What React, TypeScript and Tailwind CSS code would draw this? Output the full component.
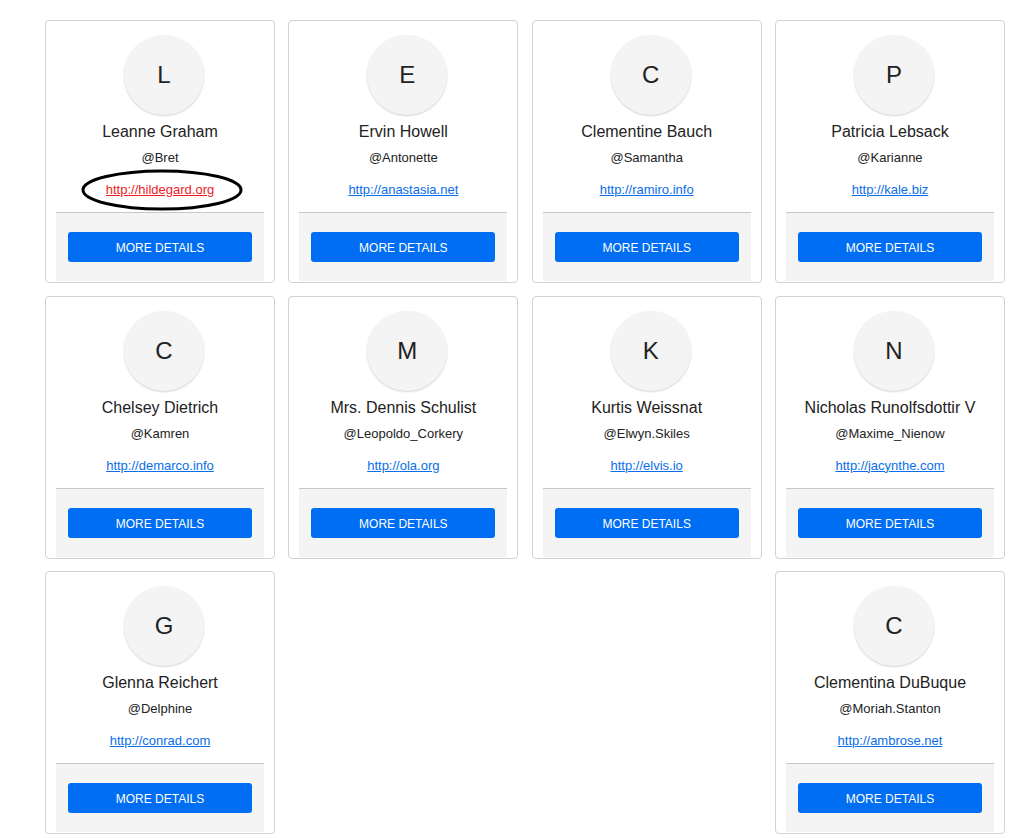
import React from 'react';

type User = {
  id: number;
  name: string;
  username: string;
  website: string;
};

const users: User[] = [
  { id: 1, name: 'Leanne Graham', username: 'Bret', website: 'hildegard.org' },
  { id: 2, name: 'Ervin Howell', username: 'Antonette', website: 'anastasia.net' },
  { id: 3, name: 'Clementine Bauch', username: 'Samantha', website: 'ramiro.info' },
  { id: 4, name: 'Patricia Lebsack', username: 'Karianne', website: 'kale.biz' },
  { id: 5, name: 'Chelsey Dietrich', username: 'Kamren', website: 'demarco.info' },
  { id: 6, name: 'Mrs. Dennis Schulist', username: 'Leopoldo_Corkery', website: 'ola.org' },
  { id: 7, name: 'Kurtis Weissnat', username: 'Elwyn.Skiles', website: 'elvis.io' },
  { id: 8, name: 'Nicholas Runolfsdottir V', username: 'Maxime_Nienow', website: 'jacynthe.com' },
  { id: 9, name: 'Glenna Reichert', username: 'Delphine', website: 'conrad.com' },
  { id: 10, name: 'Clementina DuBuque', username: 'Moriah.Stanton', website: 'ambrose.net' },
];

const UserCard = ({ user, highlighted }: { user: User; highlighted?: boolean }) => {
  return (
    <div className="relative w-[230px] rounded-[4px] border border-[#d2d2d2] bg-white px-[10px] pt-[10px] pb-px">
      <div className="flex flex-col items-center">
        {/* avatar */}
        <div className="mt-[4px] ml-[8px] flex h-20 w-20 items-center justify-center rounded-full bg-[#f4f4f4] text-[24px] text-[#222] shadow-[0_1px_2px_rgba(0,0,0,0.18)]">
          {user.name[0]}
        </div>
        <h2 className="mt-[8px] text-[16px] leading-[18px] text-[#222] whitespace-nowrap">{user.name}</h2>
        <p className="mt-[9px] text-[13px] leading-[16px] text-[#222]">@{user.username}</p>
        <a
          href="#"
          className={`mt-[16px] text-[13px] leading-[16px] underline ${highlighted ? 'text-[#ee1c25]' : 'text-[#0a6ee8]'}`}
        >
          http://{user.website}
        </a>
      </div>

      {/* card footer */}
      <div className="mt-[14px] border-t border-[#c8c8c8] bg-[#f4f4f4] px-[12px] pt-[19px] pb-[19px]">
        <button className="h-[30px] w-[184px] rounded-[3px] bg-[#006ef2] pt-[2px] text-[12px] text-white">
          MORE DETAILS
        </button>
      </div>

      {highlighted && (
        <svg className="pointer-events-none absolute left-[35px] top-[148px]" width="162" height="42" viewBox="0 0 162 42">
          <ellipse cx="81" cy="21" rx="79" ry="19" fill="none" stroke="#000" strokeWidth="3" />
        </svg>
      )}
    </div>
  );
};

const App = () => {
  return (
    <div className="min-h-screen bg-white pl-[45px] pt-[20px] font-['Liberation_Sans',Arial,sans-serif]">
      <div className="flex w-[960px] flex-wrap justify-between gap-y-[12.5px]">
        {users.map((u) => (
          <UserCard key={u.id} user={u} highlighted={u.id === 1} />
        ))}
      </div>
    </div>
  );
};

export default App;
